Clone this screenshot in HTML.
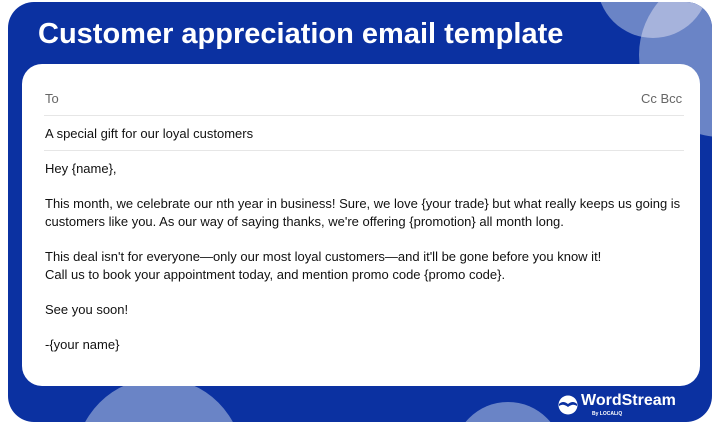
<!DOCTYPE html>
<html><head><style>
*{margin:0;padding:0;box-sizing:border-box}
html,body{width:720px;height:438px;overflow:hidden}
body{background:#fff;position:relative;font-family:"Liberation Sans",Arial,sans-serif}
.outer{position:absolute;left:8px;top:2px;width:704px;height:420px;background:#0b31a1;border-radius:26px;overflow:hidden}
.c{position:absolute;border-radius:50%}
.title{position:absolute;left:30px;top:16px;color:#fff;font-weight:bold;font-size:29px;letter-spacing:0px}
.card{position:absolute;left:14px;top:62px;width:678px;height:322px;background:#fff;border-radius:20px}
.t{position:absolute;font-size:13px;color:#111;white-space:nowrap}
.g{color:#666}
.hr{position:absolute;left:22px;width:640px;height:1px;background:#e6e6e6}
.logo{position:absolute;left:550px;top:393px;color:#fff;width:170px;height:30px;overflow:hidden}
</style></head><body>
<div class="outer">
 <div class="c" style="left:631px;top:-29px;width:164px;height:164px;background:#6a84c6"></div>
 <div class="c" style="left:589px;top:-76px;width:112px;height:112px;background:#6a84c6"></div>
 <div class="c" style="left:589px;top:-76px;width:112px;height:112px;overflow:hidden;background:transparent">
   <div class="c" style="left:42px;top:47px;width:164px;height:164px;background:#a6b3dc"></div>
 </div>
 <div class="c" style="left:67px;top:376px;width:168px;height:168px;background:#6a84c6"></div>
 <div class="c" style="left:445px;top:400px;width:110px;height:110px;background:#6a84c6"></div>
 <div class="title">Customer appreciation email template</div>
 <div class="card">
  <div class="t g" style="left:23px;top:27px">To</div>
  <div class="t g" style="left:619px;top:27px">Cc Bcc</div>
  <div class="hr" style="top:51px"></div>
  <div class="t" style="left:23px;top:62px">A special gift for our loyal customers</div>
  <div class="hr" style="top:86px"></div>
  <div class="t" style="left:23px;top:97px">Hey {name},</div>
  <div class="t" style="left:23px;top:132px">This month, we celebrate our nth year in business! Sure, we love {your trade} but what really keeps us going is</div>
  <div class="t" style="left:23px;top:150px">customers like you. As our way of saying thanks, we're offering {promotion} all month long.</div>
  <div class="t" style="left:23px;top:185px">This deal isn't for everyone—only our most loyal customers—and it'll be gone before you know it!</div>
  <div class="t" style="left:23px;top:203px">Call us to book your appointment today, and mention promo code {promo code}.</div>
  <div class="t" style="left:23px;top:238px">See you soon!</div>
  <div class="t" style="left:23px;top:273px">-{your name}</div>
 </div>
</div>
<div class="logo">
 <svg width="20" height="20" viewBox="0 0 20 20" style="position:absolute;left:8px;top:2px"><circle cx="10" cy="10" r="9.5" fill="#fff"/><path d="M1 9 Q5 5 10 9 Q15 5 19 9 L19 11 Q15 8 10 12 Q5 8 1 11Z" fill="#0b31a1"/></svg>
 <div style="position:absolute;left:31px;top:-1px;font-weight:bold;font-size:16px;white-space:nowrap">WordStream</div>
 <div style="position:absolute;left:42px;top:18px;font-size:5px;font-weight:bold;white-space:nowrap">By LOCALiQ</div>
</div>
</body></html>
